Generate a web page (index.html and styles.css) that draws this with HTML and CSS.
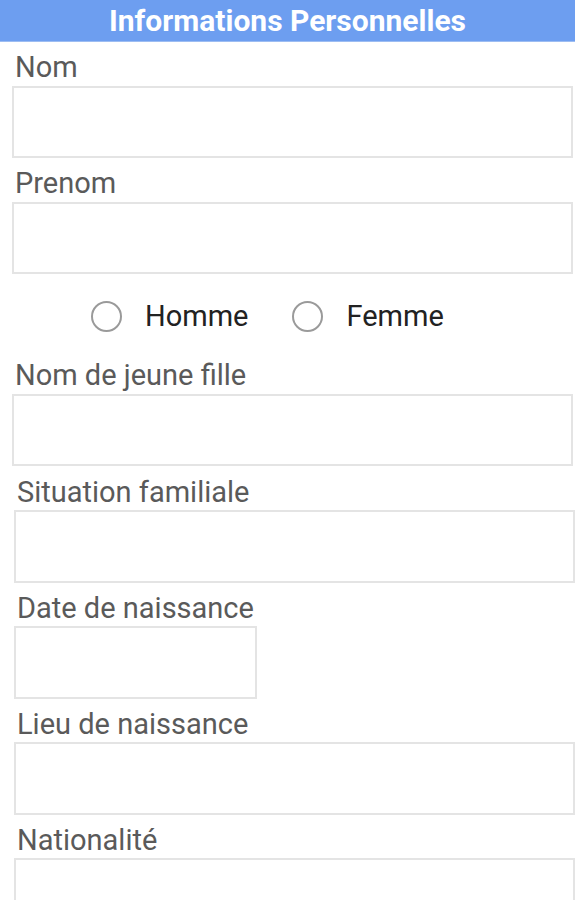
FILE: index.html
```html
<!DOCTYPE html>
<html lang="fr">
<head>
<meta charset="utf-8">
<title>Informations Personnelles</title>
<link rel="stylesheet" href="styles.css">
</head>
<body>
<header class="title-bar">Informations Personnelles</header>
<form class="form">
  <div class="group group-a">
    <label class="field-label" for="nom">Nom</label>
    <input class="field" id="nom" type="text">
    <label class="field-label" for="prenom">Prenom</label>
    <input class="field" id="prenom" type="text">
    <div class="radio-row">
      <label class="radio"><span class="radio-dot"></span>Homme</label>
      <label class="radio"><span class="radio-dot"></span>Femme</label>
    </div>
    <label class="field-label" for="jf">Nom de jeune fille</label>
    <input class="field" id="jf" type="text">
  </div>
  <div class="group group-b">
    <label class="field-label" for="sf">Situation familiale</label>
    <input class="field" id="sf" type="text">
    <label class="field-label" for="dn">Date de naissance</label>
    <input class="field field-short" id="dn" type="text">
    <label class="field-label" for="ln">Lieu de naissance</label>
    <input class="field" id="ln" type="text">
    <label class="field-label" for="nat">Nationalité</label>
    <input class="field" id="nat" type="text">
  </div>
</form>
</body>
</html>
```

FILE: styles.css
```css
* { box-sizing: border-box; }
html, body { margin: 0; padding: 0; background: #fff; }
body {
  font-family: Roboto, "Liberation Sans", sans-serif;
  width: 575px;
  overflow: hidden;
}
.title-bar {
  height: 42px;
  background: #6d9ef0;
  border-bottom: 1px solid #9dbdf2;
  color: #fff;
  font-weight: 700;
  font-size: 30px;
  line-height: 41px;
  text-align: center;
}
.form { display: flex; flex-direction: column; }
.group { display: flex; flex-direction: column; }
.group-a { padding-left: 12px; padding-right: 2px; }
.group-b { padding-left: 14px; padding-top: 1px; }
.group-b .field { height: 73px; }
.field-label {
  display: block;
  height: 44px;
  font-size: 29px;
  line-height: 33px;
  padding-top: 9px;
  padding-left: 3px;
  color: #5a5a5a;
}
.group-b .field-label { height: 43px; }
.field {
  display: block;
  width: 561px;
  height: 72px;
  border: 2px solid #e4e4e4;
  background: #fff;
  margin: 0;
  padding: 0 8px;
  font: inherit;
  outline: none;
}
.field-short { width: 243px; }
.radio-row {
  display: flex;
  align-items: center;
  gap: 44px;
  height: 76px;
  padding-left: 79px;
  padding-top: 8px;
}
.radio {
  display: flex;
  align-items: center;
  gap: 23px;
  font-size: 29px;
  color: #222;
}
.radio-dot {
  width: 31px;
  height: 31px;
  border: 2px solid #9a9a9a;
  border-radius: 50%;
  background: #fff;
}
```
